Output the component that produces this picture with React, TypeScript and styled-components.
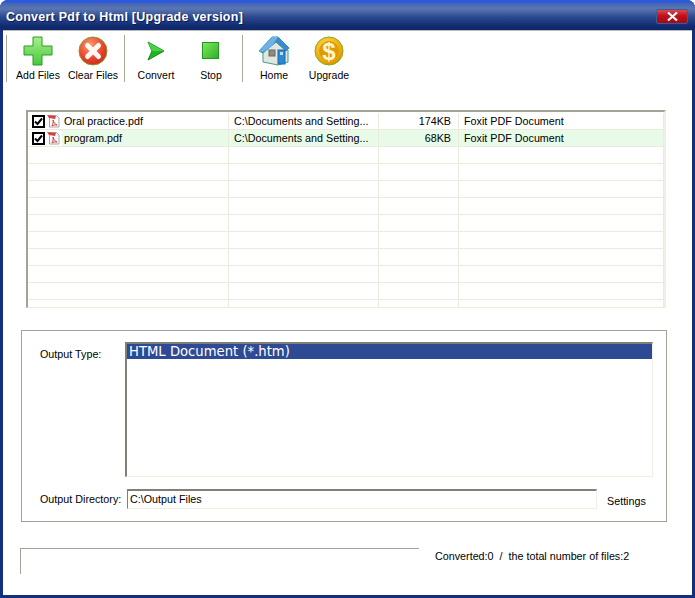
import { createGlobalStyle } from "styled-components";
import styled from "styled-components";

const GlobalStyle = createGlobalStyle`
  html, body {
    margin: 0;
    padding: 0;
    background: #ffffff;
  }
  * {
    box-sizing: border-box;
  }
`

const Window = styled.div`
  width: 695px;
  height: 598px;
  display: flex;
  flex-direction: column;
  overflow: hidden;
  border-radius: 8px 8px 0 0;
  background: #12307f;
  font-family: "Liberation Sans", Arial, sans-serif;
  font-size: 10.75px;
  color: #000;
`

const TitleBar = styled.div`
  height: 30px;
  flex: none;
  display: flex;
  align-items: center;
  justify-content: space-between;
  padding: 2px 6px 0 6px;
  background: linear-gradient(180deg, #2c58dc 0, #2c58dc 2px, #4a68b4 4px, #5a76b0 9px, #2d4a90 17px, #102a70 26px, #0f2868 30px);
`

const TitleText = styled.div`
  color: #fff;
  font-family: "Liberation Sans", Arial, sans-serif;
  font-weight: 700;
  font-size: 12.5px;
  letter-spacing: 0.25px;
  padding-top: 1px;
  text-shadow: 1px 1px 0 #0a1c50;
`

const CloseButton = styled.div`
  width: 32px;
  height: 15px;
  margin: 0 1px 0 0;
  display: flex;
  align-items: center;
  justify-content: center;
  border: 1px solid #3c5aa0;
  border-radius: 2px;
  background: linear-gradient(180deg, #d84a50 0, #c01018 45%, #a00c12 100%);
`

const Client = styled.div`
  flex: 1;
  margin: 0 3px 3px 3px;
  background: #fff;
  display: flex;
  flex-direction: column;
`

const Toolbar = styled.div`
  height: 53px;
  flex: none;
  display: flex;
  padding: 4px 0 1px 3px;
  border-top: 1px solid #b8b8b4;
`

const Separator = styled.div`
  width: 1px;
  background: #aca899;
  margin-right: 3px;
`

const ToolGroup = styled.div`
  display: flex;
  margin-right: 4px;
`

const ToolButton = styled.div`
  width: 55px;
  display: flex;
  flex-direction: column;
  align-items: center;
  padding: 2px 0 0 1px;
  font-size: 10.5px;
  white-space: nowrap;
`

const ToolIcon = styled.div`
  width: 32px;
  height: 28px;
  margin-bottom: 4px;
  display: flex;
  align-items: center;
  justify-content: center;
`

const FileList = styled.div`
  width: 640px;
  height: 198px;
  flex: none;
  margin: 27px 0 0 23px;
  padding-top: 1px;
  overflow: hidden;
  border-top: 2px solid #a2a296;
  border-left: 2px solid #a2a296;
  border-right: 2px solid #f0efe6;
  border-bottom: 1px solid #ebeadb;
`

const Row = styled.div<{ $alt?: boolean }>`
  height: 17px;
  display: grid;
  grid-template-columns: 201px 150px 80px 205px;
  background: ${(p) => (p.$alt ? "#e8fbe8" : "#fff")};
  border-bottom: 1px solid #ebeadb;
`

const Cell = styled.div<{ $right?: boolean }>`
  display: flex;
  align-items: center;
  padding: ${(p) => (p.$right ? "0 7px 0 0" : "0 5px")};
  justify-content: ${(p) => (p.$right ? "flex-end" : "flex-start")};
  border-right: 1px solid #ebeadb;
  white-space: nowrap;
`

const NameCell = styled(Cell)`
  padding: 0;
`

const FileIcons = styled.div`
  width: 34px;
  height: 100%;
  flex: none;
  display: flex;
  align-items: center;
  gap: 2px;
  padding-left: 4px;
  background: #fff;
`

const Check = styled.div`
  width: 13px;
  height: 13px;
  flex: none;
  border: 2px solid #000;
  background: #fff;
  display: flex;
  align-items: center;
  justify-content: center;
`

const FileName = styled.span`
  margin-left: 2px;
`

const OutputGroup = styled.div`
  width: 646px;
  height: 192px;
  flex: none;
  margin: 22px 0 0 18px;
  padding: 11px 0 0 18px;
  border: 1px solid #a2a296;
  display: flex;
  flex-direction: column;
`

const TypeRow = styled.div`
  display: flex;
`

const FieldLabel = styled.div<{ $wide?: boolean }>`
  width: ${(p) => (p.$wide ? "87px" : "85px")};
  flex: none;
  white-space: nowrap;
`

const TypeLabel = styled(FieldLabel)`
  padding-top: 6px;
`

const TypeList = styled.div`
  width: 528px;
  height: 135px;
  border-top: 2px solid #7f7f76;
  border-left: 2px solid #7f7f76;
  border-right: 1px solid #f0efe6;
  border-bottom: 1px solid #f0efe6;
`

const TypeOption = styled.div`
  height: 15px;
  padding-left: 2px;
  line-height: 15px;
  background: #2f4a94;
  color: #fff;
  font-family: "DejaVu Sans", Verdana, sans-serif;
  font-size: 13.2px;
`

const DirRow = styled.div`
  display: flex;
  align-items: center;
  margin-top: 12px;
`

const DirInput = styled.div`
  width: 470px;
  height: 20px;
  padding-left: 2px;
  line-height: 16px;
  border-top: 2px solid #7f7f76;
  border-left: 1px solid #7f7f76;
  border-right: 1px solid #f0efe6;
  border-bottom: 1px solid #f0efe6;
`

const SettingsLink = styled.div`
  margin: 4px 0 0 10px;
`

const StatusRow = styled.div`
  display: flex;
  margin: 26px 0 0 17px;
`

const StatusBox = styled.div`
  width: 399px;
  height: 26px;
  border-top: 1px solid #a2a296;
  border-left: 1px solid #a2a296;
`

const StatusText = styled.div`
  margin: 2px 0 0 16px;
  white-space: pre;
`

function AddIcon() {
  return (
    <svg width="30" height="30" viewBox="0 0 30 30">
      <defs>
        <linearGradient id="addFill" x1="0" y1="0" x2="0" y2="1">
          <stop offset="0" stopColor="#a6f08c" />
          <stop offset="1" stopColor="#46c83c" />
        </linearGradient>
      </defs>
      <path d="M10 1h9v9h10v9H19v10h-9V19H1v-9h9z" fill="url(#addFill)" stroke="#2c9a24" strokeWidth="1" />
    </svg>
  );
}

function ClearIcon() {
  return (
    <svg width="30" height="30" viewBox="0 0 30 30">
      <defs>
        <radialGradient id="clearFill" cx="0.4" cy="0.3" r="0.8">
          <stop offset="0" stopColor="#ff9a70" />
          <stop offset="0.6" stopColor="#e8432c" />
          <stop offset="1" stopColor="#c02810" />
        </radialGradient>
      </defs>
      <circle cx="15" cy="15" r="14" fill="url(#clearFill)" stroke="#8a9a30" strokeWidth="1" />
      <path d="M9.5 9.5l11 11M20.5 9.5l-11 11" stroke="#fff" strokeWidth="5" strokeLinecap="round" opacity="0.95" />
    </svg>
  );
}

function ConvertIcon() {
  return (
    <svg width="18" height="20" viewBox="0 0 18 20">
      <path d="M1 1l16 9-16 9 4-9z" fill="#22b422" stroke="#0c8a0c" strokeWidth="1" />
      <path d="M5 10l-4-9 16 9z" fill="#48d048" />
    </svg>
  );
}

function StopIcon() {
  return (
    <svg width="18" height="18" viewBox="0 0 18 18">
      <defs>
        <linearGradient id="stopFill" x1="0" y1="0" x2="1" y2="1">
          <stop offset="0" stopColor="#80e860" />
          <stop offset="1" stopColor="#2fae26" />
        </linearGradient>
      </defs>
      <rect x="0.5" y="0.5" width="16" height="16" fill="url(#stopFill)" stroke="#1f9a1c" />
    </svg>
  );
}

function HomeIcon() {
  return (
    <svg width="32" height="30" viewBox="0 0 32 30">
      <path d="M5 14v12l15 3 10-3V14L18 4z" fill="#e4e4e0" stroke="#3aa08a" strokeWidth="1" />
      <path d="M1 15L14 1h6l11 11-3 3-10-9-13 11z" fill="#3f88d8" stroke="#2a9a80" strokeWidth="1" />
      <path d="M14 1l6 0-6 9-9 6-4-1z" fill="#6fb0ea" />
      <rect x="11" y="14" width="6" height="6" fill="#8a8a88" stroke="#666" strokeWidth="1" />
      <rect x="20" y="14" width="7" height="14" fill="#2a8ad0" stroke="#1a6aa8" strokeWidth="1" />
      <rect x="22" y="16" width="3" height="3" fill="#bfe0f4" />
    </svg>
  );
}

const CoinText = styled.text`
  font-family: "Liberation Sans", Arial, sans-serif;
  font-weight: 700;
  font-size: 24px;
  fill: #fff6c8;
`

function UpgradeIcon() {
  return (
    <svg width="30" height="30" viewBox="0 0 30 30">
      <defs>
        <radialGradient id="coinFill" cx="0.4" cy="0.3" r="0.8">
          <stop offset="0" stopColor="#ffd94a" />
          <stop offset="0.7" stopColor="#eaa808" />
          <stop offset="1" stopColor="#c88a00" />
        </radialGradient>
      </defs>
      <circle cx="15" cy="15" r="14" fill="url(#coinFill)" stroke="#8ea81c" strokeWidth="1" />
      <circle cx="15" cy="15" r="10" fill="#e09a06" />
      <CoinText x="15" y="23.5" textAnchor="middle">$</CoinText>
    </svg>
  );
}

function PdfIcon() {
  return (
    <svg width="14" height="14" viewBox="0 0 14 14">
      <path d="M2.5 1.5h7l2.5 2.5v9h-9.5z" fill="#fbfbfb" stroke="#a8a8a8" strokeWidth="1" />
      <path d="M0 1l9 1-1 3-6-1z" fill="#d84040" />
      <path d="M6 6c1 3 2 4 4 5-2-.3-4 0-5 1 1-2 1.500-4 1-6z" fill="none" stroke="#d04040" strokeWidth="1" />
    </svg>
  );
}

const files = [
  { name: "Oral practice.pdf", dir: "C:\\Documents and Setting...", size: "174KB", type: "Foxit PDF Document" },
  { name: "program.pdf", dir: "C:\\Documents and Setting...", size: "68KB", type: "Foxit PDF Document" },
];

const emptyRows = Array.from({ length: 10 }, (_, i) => i);

export default function App() {
  return (
    <>
      <GlobalStyle />
      <Window>
        <TitleBar>
          <TitleText>Convert Pdf to Html [Upgrade version]</TitleText>
          <CloseButton>
            <svg width="13" height="11" viewBox="0 0 13 11">
              <path d="M2 1.500l9 8M11 1.500l-9 8" stroke="#fff" strokeWidth="2.200" />
            </svg>
          </CloseButton>
        </TitleBar>
        <Client>
          <Toolbar>
            <Separator />
            <ToolGroup>
              <ToolButton><ToolIcon><AddIcon /></ToolIcon>Add Files</ToolButton>
              <ToolButton><ToolIcon><ClearIcon /></ToolIcon>Clear Files</ToolButton>
            </ToolGroup>
            <Separator />
            <ToolGroup>
              <ToolButton><ToolIcon><ConvertIcon /></ToolIcon>Convert</ToolButton>
              <ToolButton><ToolIcon><StopIcon /></ToolIcon>Stop</ToolButton>
            </ToolGroup>
            <Separator />
            <ToolGroup>
              <ToolButton><ToolIcon><HomeIcon /></ToolIcon>Home</ToolButton>
              <ToolButton><ToolIcon><UpgradeIcon /></ToolIcon>Upgrade</ToolButton>
            </ToolGroup>
          </Toolbar>

          <FileList>
            {files.map((f, i) => (
              <Row key={f.name} $alt={i === 1}>
                <NameCell>
                  <FileIcons>
                    <Check>
                      <svg width="9" height="9" viewBox="0 0 9 9">
                        <path d="M1 4.500l2.500 2.500L8 1.500" fill="none" stroke="#000" strokeWidth="2" />
                      </svg>
                    </Check>
                    <PdfIcon />
                  </FileIcons>
                  <FileName>{f.name}</FileName>
                </NameCell>
                <Cell>{f.dir}</Cell>
                <Cell $right>{f.size}</Cell>
                <Cell>{f.type}</Cell>
              </Row>
            ))}
            {emptyRows.map((i) => (
              <Row key={i}>
                <Cell />
                <Cell />
                <Cell />
                <Cell />
              </Row>
            ))}
          </FileList>

          <OutputGroup>
            <TypeRow>
              <TypeLabel>Output Type:</TypeLabel>
              <TypeList>
                <TypeOption>HTML Document (*.htm)</TypeOption>
              </TypeList>
            </TypeRow>
            <DirRow>
              <FieldLabel $wide>Output Directory:</FieldLabel>
              <DirInput>C:\Output Files</DirInput>
              <SettingsLink>Settings</SettingsLink>
            </DirRow>
          </OutputGroup>

          <StatusRow>
            <StatusBox />
            <StatusText>Converted:0  /  the total number of files:2</StatusText>
          </StatusRow>
        </Client>
      </Window>
    </>
  );
}
